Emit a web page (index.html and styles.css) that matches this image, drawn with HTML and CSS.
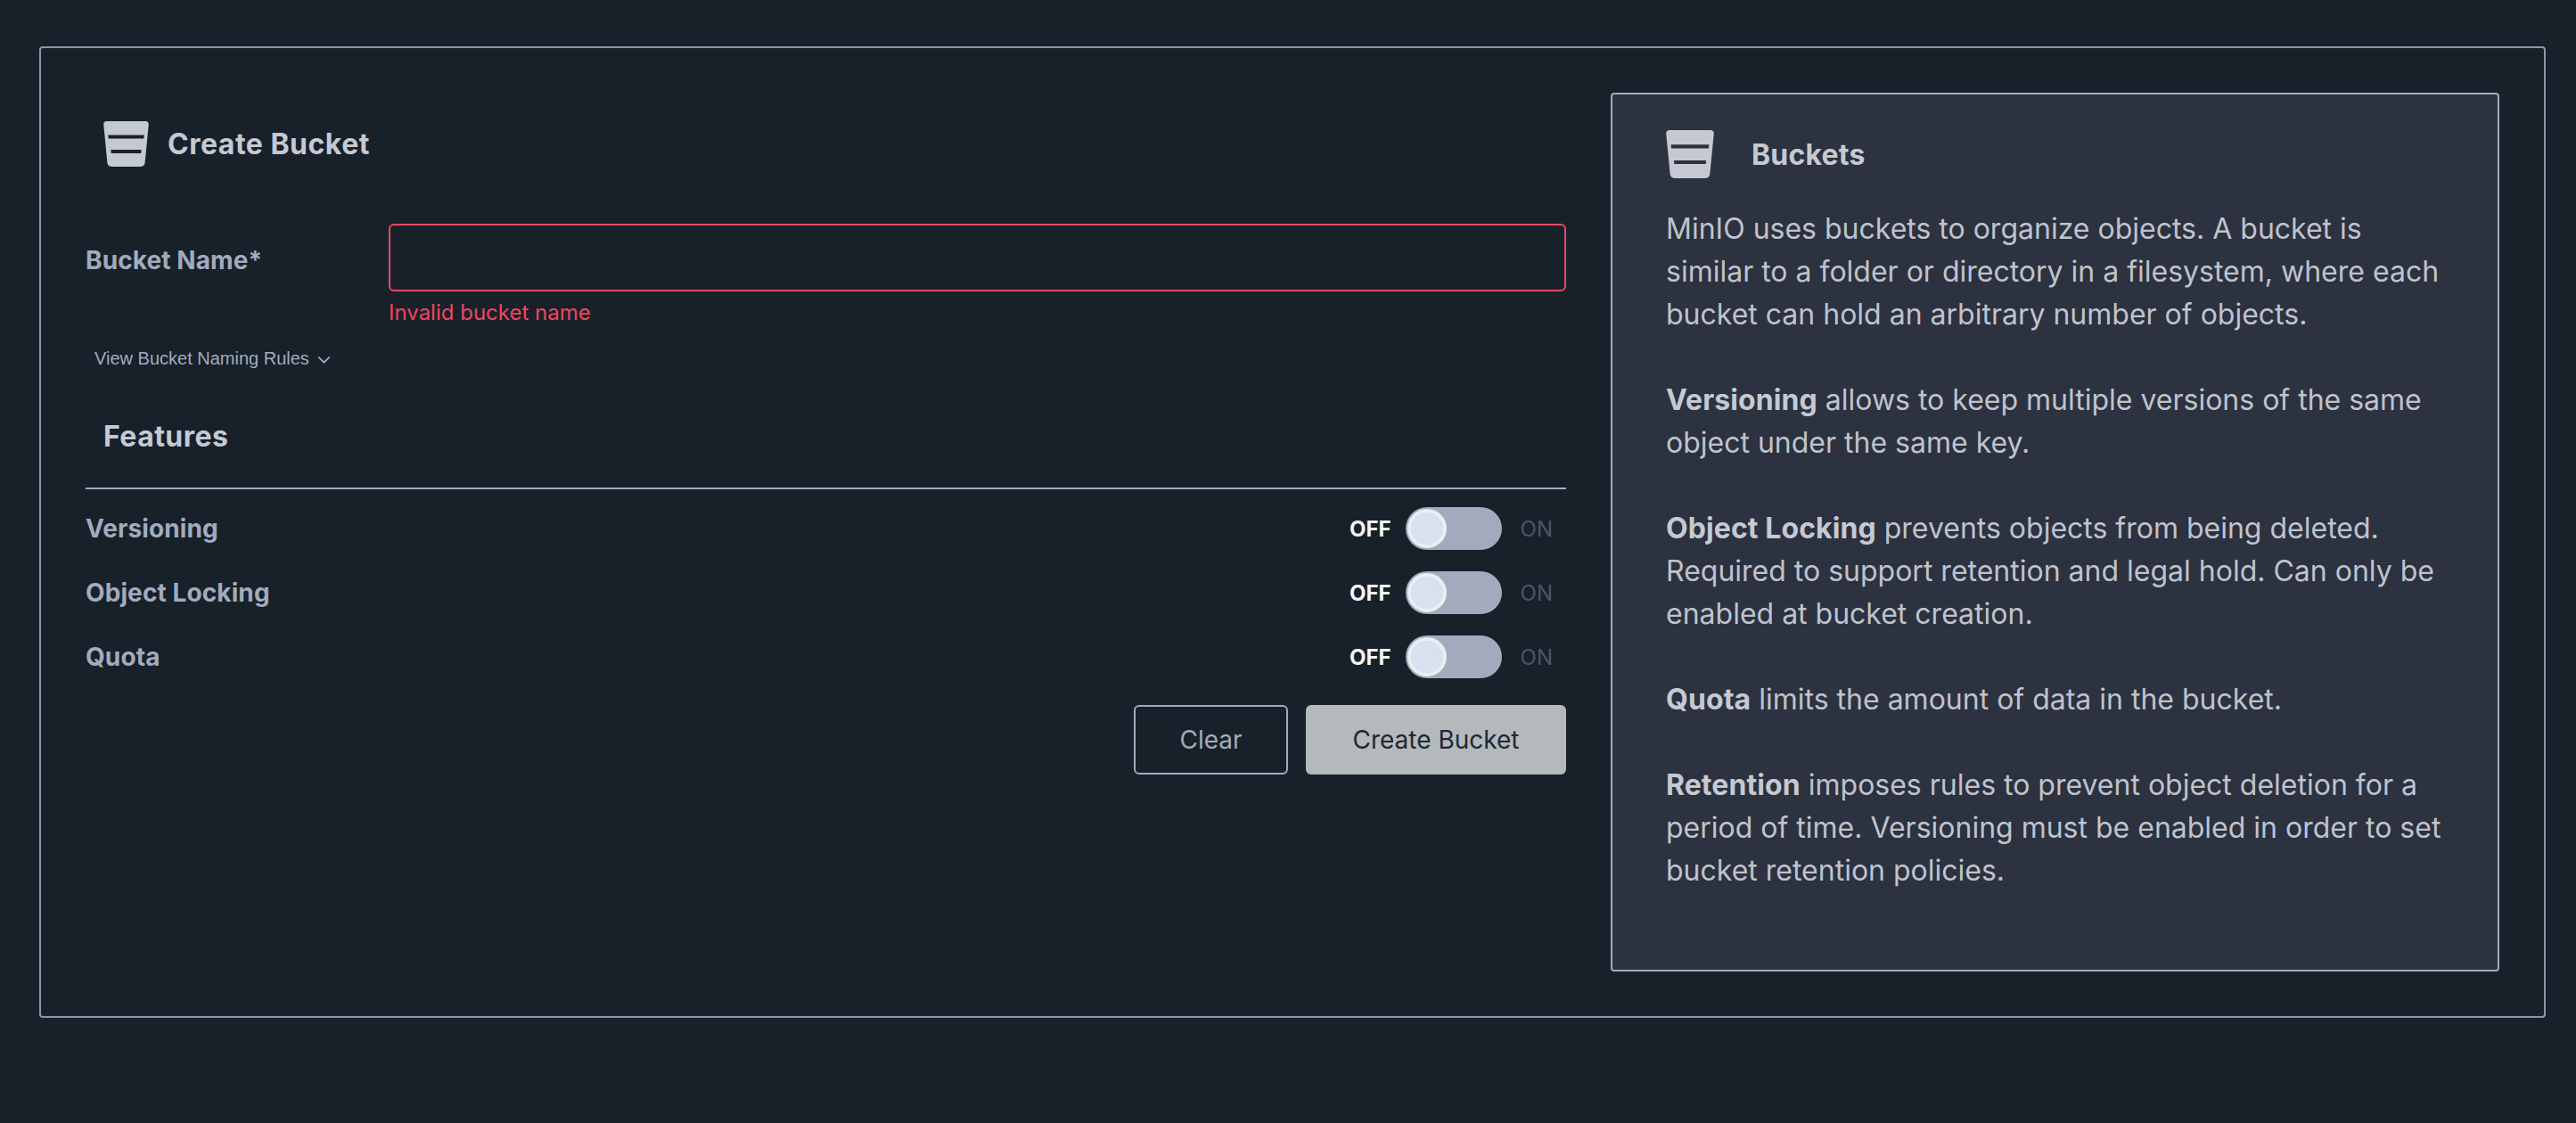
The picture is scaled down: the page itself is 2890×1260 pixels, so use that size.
FILE: index.html
```html
<!DOCTYPE html>
<html lang="en">
<head>
<meta charset="utf-8">
<title>Create Bucket</title>
<link rel="stylesheet" href="styles.css">
</head>
<body>
<svg class="defs" width="0" height="0" aria-hidden="true">
  <symbol id="bucket" viewBox="0 0 51 51">
    <path fill-rule="evenodd" d="M3.5 0H47.5A3.3 3.3 0 0 1 50.8 3.6L46.6 46.6A5 5 0 0 1 41.6 51H9.4A5 5 0 0 1 4.4 46.6L.2 3.6A3.3 3.3 0 0 1 3.5 0ZM5.3 15.4 5.7 19.4H45.3L45.7 15.4ZM8.4 32 8.8 36H42.2L42.6 32Z"/>
  </symbol>
</svg>
<main class="frame">
  <section class="form">
    <header class="form-title">
      <svg class="icon-title"><use href="#bucket"/></svg>
      <h1>Create Bucket</h1>
    </header>
    <div class="name-row">
      <label class="field-label" for="bucket-name">Bucket Name*</label>
      <div class="name-field">
        <input id="bucket-name" class="name-input" type="text">
        <div class="name-error">Invalid bucket name</div>
      </div>
    </div>
    <button class="rules-link" type="button">View Bucket Naming Rules
      <svg class="chevron" viewBox="0 0 14 8"><path d="M1 1l6 6 6-6"/></svg>
    </button>
    <h2 class="features-title">Features</h2>
    <div class="features">
      <div class="feature">
        <span class="field-label">Versioning</span>
        <div class="switch"><span class="off">OFF</span><span class="track"><span class="knob"></span></span><span class="on">ON</span></div>
      </div>
      <div class="feature">
        <span class="field-label">Object Locking</span>
        <div class="switch"><span class="off">OFF</span><span class="track"><span class="knob"></span></span><span class="on">ON</span></div>
      </div>
      <div class="feature">
        <span class="field-label">Quota</span>
        <div class="switch"><span class="off">OFF</span><span class="track"><span class="knob"></span></span><span class="on">ON</span></div>
      </div>
    </div>
    <div class="actions">
      <button class="btn btn-clear" type="button">Clear</button>
      <button class="btn btn-create" type="button">Create Bucket</button>
    </div>
  </section>
  <aside class="help">
    <header class="help-title">
      <svg class="icon-help"><use href="#bucket"/></svg>
      <h3>Buckets</h3>
    </header>
    <p>MinIO uses buckets to organize objects. A bucket is similar to a folder or directory in a filesystem, where each bucket can hold an arbitrary number of objects.</p>
    <p><b>Versioning</b> allows to keep multiple versions of the same object under the same key.</p>
    <p><b>Object Locking</b> prevents objects from being deleted. Required to support retention and legal hold. Can only be enabled at bucket creation.</p>
    <p><b>Quota</b> limits the amount of data in the bucket.</p>
    <p><b>Retention</b> imposes rules to prevent object deletion for a period of time. Versioning must be enabled in order to set bucket retention policies.</p>
  </aside>
</main>
</body>
</html>
```

FILE: styles.css
```css
* { box-sizing: border-box; }
html, body { height: 100%; }
body {
  margin: 0;
  padding: 52px 34px 0 44px;
  background: #18202a;
  font-family: Inter, "Noto Sans", sans-serif;
  color: #c5c9d2;
  overflow: hidden;
}
.defs { position: absolute; }
.frame {
  display: grid;
  grid-template-columns: 1661px 997px;
  column-gap: 50px;
  height: 1090px;
  padding: 50px;
  border: 2px solid #8e95a6;
  border-radius: 4px;
}
.form-title {
  display: flex;
  align-items: center;
  gap: 21px;
  height: 52px;
  margin: 31px 0 0 20px;
}
.icon-title { width: 51px; height: 51px; fill: #c5c9d2; }
.form-title h1 {
  margin: 0;
  font-size: 32px;
  font-weight: 700;
  letter-spacing: .5px;
  color: #c5c9d2;
}
.name-row {
  display: flex;
  margin-top: 64px;
}
.field-label {
  font-size: 28px;
  line-height: 36px;
  font-weight: 700;
  letter-spacing: .1px;
  color: #a2abbd;
}
.name-row .field-label { width: 340px; padding-top: 23px; }
.name-field { flex: 1; }
.name-input {
  display: block;
  width: 100%;
  height: 76px;
  background: transparent;
  border: 2px solid #ee475f;
  border-radius: 6px;
  outline: none;
}
.name-error {
  margin-top: 9px;
  font-size: 24px;
  line-height: 30px;
  color: #ee475f;
}
.rules-link {
  display: flex;
  align-items: center;
  gap: 9px;
  margin: 24px 0 0 10px;
  padding: 0;
  background: none;
  border: 0;
  font-family: "Liberation Sans", Arial, sans-serif;
  font-size: 20px;
  line-height: 24px;
  color: #a2abbd;
}
.chevron { width: 15px; height: 9px; margin-top: 3px; fill: none; stroke: #a2abbd; stroke-width: 1.6; }
.features-title {
  margin: 56px 0 0 20px;
  font-size: 32px;
  line-height: 40px;
  font-weight: 700;
  letter-spacing: .45px;
  color: #c5c9d2;
}
.features {
  margin-top: 37px;
  padding-top: 20px;
  border-top: 2px solid #a2abbd;
}
.feature {
  display: flex;
  justify-content: space-between;
  align-items: center;
  height: 48px;
  margin-bottom: 24px;
}
.switch {
  display: flex;
  align-items: center;
  margin-right: 15px;
  font-size: 24px;
}
.off { font-weight: 700; color: #f4f5f6; margin-right: 16px; }
.on { color: #4d5566; margin-left: 21px; }
.track {
  display: block;
  width: 108px;
  height: 48px;
  padding: 2px;
  border-radius: 24px;
  background: #a2abbd;
}
.knob {
  display: block;
  width: 44px;
  height: 44px;
  border: 4px solid #eaeef0;
  border-radius: 50%;
  background: #d9e0ee;
}
.actions {
  display: flex;
  justify-content: flex-end;
  gap: 20px;
  margin-top: 30px;
}
.btn {
  height: 78px;
  padding: 0;
  border-radius: 6px;
  font-family: Inter, sans-serif;
  font-size: 28px;
  font-weight: 400;
}
.btn-clear {
  width: 173px;
  background: transparent;
  border: 2px solid #a2abbd;
  color: #a2abbd;
}
.btn-create {
  width: 292px;
  background: #b4b9bb;
  border: 0;
  color: #1f2733;
}
.help {
  padding: 40px 60px 0;
  background: #2c323f;
  border: 2px solid #a2abbd;
  border-radius: 4px;
  height: 986px;
}
.help-title {
  display: flex;
  align-items: center;
  gap: 42px;
  height: 54px;
}
.icon-help { width: 54px; height: 54px; fill: #c5c9d2; }
.help-title h3 {
  margin: 0;
  font-size: 32px;
  font-weight: 700;
  letter-spacing: .2px;
  color: #c5c9d2;
}
.help p {
  margin: 0 0 48px;
  font-size: 32px;
  line-height: 48px;
  color: #bfc3cd;
}
.help-title + p { margin-top: 33px; }
.help b { font-weight: 700; letter-spacing: .08px; color: #c5c9d2; }
```
